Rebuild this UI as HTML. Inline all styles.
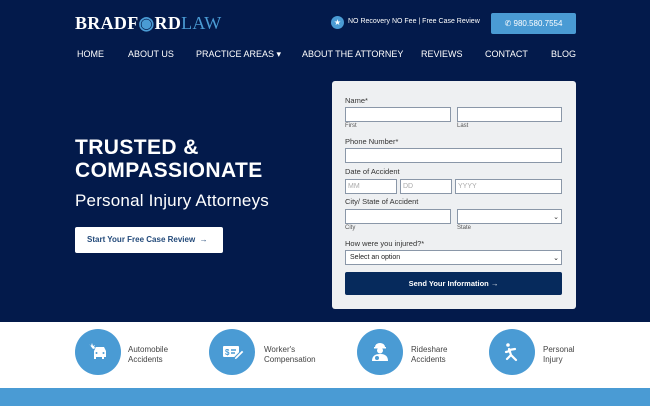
<!DOCTYPE html>
<html><head><style>
*{margin:0;padding:0;box-sizing:border-box}
body{width:650px;height:406px;overflow:hidden;background:#fff;font-family:"Liberation Sans",sans-serif;position:relative}
.hero{position:absolute;left:0;top:0;width:650px;height:322px;background:#031a4b}
.abs{position:absolute}
.logo{left:75px;top:13px;font-family:"Liberation Serif",serif;font-weight:bold;font-size:18px;color:#fff;letter-spacing:0.3px}
.logo span{color:#4a9bd4;font-weight:normal}
.nav{top:49px;font-size:9px;color:#fff}
.lbl{font-size:7.5px;color:#333}
.sub{font-size:6px;color:#555}
.in{position:absolute;height:15px;background:#fff;border:1px solid #8a97a8;font-size:7px;color:#aaa;padding:3px 2px}
.circ{position:absolute;top:329px;width:46px;height:46px;border-radius:50%;background:#4a9bd4}
.circ svg{position:absolute;left:13px;top:13px}
.ct{position:absolute;top:345px;font-size:8px;color:#444;line-height:10px}
</style></head><body>
<div class="hero"></div>
<div class="abs logo">BRADF<b style="color:#4a9bd4">◉</b>RD<span>LAW</span></div>
<div class="abs" style="left:331px;top:16px;width:13px;height:13px;border-radius:50%;background:#4a9bd4;color:#fff;font-size:8px;text-align:center;line-height:13px">★</div>
<div class="abs" style="left:348px;top:18px;font-size:7px;color:#fff">NO Recovery NO Fee | Free Case Review</div>
<div class="abs" style="left:491px;top:13px;width:85px;height:21px;background:#4a9bd4;border-radius:2px;color:#fff;font-size:8px;line-height:21px;text-align:center">✆ 980.580.7554</div>
<div class="abs nav" style="left:77px">HOME</div>
<div class="abs nav" style="left:128px">ABOUT US</div>
<div class="abs nav" style="left:196px">PRACTICE AREAS ▾</div>
<div class="abs nav" style="left:302px">ABOUT THE ATTORNEY</div>
<div class="abs nav" style="left:421px">REVIEWS</div>
<div class="abs nav" style="left:485px">CONTACT</div>
<div class="abs nav" style="left:551px">BLOG</div>
<div class="abs" style="left:75px;top:136px;color:#fff;font-size:21px;line-height:23px;font-weight:bold;letter-spacing:0.4px">TRUSTED &amp;<br>COMPASSIONATE</div>
<div class="abs" style="left:75px;top:191px;color:#fff;font-size:17px;font-weight:300;letter-spacing:0.2px">Personal Injury Attorneys</div>
<div class="abs" style="left:75px;top:227px;width:148px;height:26px;background:#fff;border-radius:2px;color:#234a7a;font-size:8px;font-weight:bold;line-height:26px;padding-left:12px">Start Your Free Case Review &nbsp;→</div>
<div class="abs" style="left:332px;top:81px;width:244px;height:228px;background:#eef0f2;border-radius:3px"></div>
<div class="abs lbl" style="left:345px;top:96px">Name*</div>
<div class="in" style="left:345px;top:107px;width:106px"></div>
<div class="in" style="left:457px;top:107px;width:105px"></div>
<div class="abs sub" style="left:345px;top:123px">First</div>
<div class="abs sub" style="left:457px;top:123px">Last</div>
<div class="abs lbl" style="left:345px;top:137px">Phone Number*</div>
<div class="in" style="left:345px;top:148px;width:217px"></div>
<div class="abs lbl" style="left:345px;top:167px">Date of Accident</div>
<div class="in" style="left:345px;top:179px;width:52px">MM</div>
<div class="in" style="left:400px;top:179px;width:52px">DD</div>
<div class="in" style="left:455px;top:179px;width:107px">YYYY</div>
<div class="abs lbl" style="left:345px;top:197px">City/ State of Accident</div>
<div class="in" style="left:345px;top:209px;width:106px"></div>
<div class="in" style="left:457px;top:209px;width:105px;color:#333;text-align:right">⌄</div>
<div class="abs sub" style="left:345px;top:225px">City</div>
<div class="abs sub" style="left:457px;top:225px">State</div>
<div class="abs lbl" style="left:345px;top:239px">How were you injured?*</div>
<div class="in" style="left:345px;top:250px;width:217px;color:#222;padding-left:4px">Select an option<span style="float:right">⌄</span></div>
<div class="abs" style="left:345px;top:272px;width:217px;height:23px;background:#062a5c;border-radius:2px;color:#fff;font-size:7.5px;font-weight:bold;text-align:center;line-height:23px">Send Your Information →</div>
<div class="circ" style="left:75px"><svg width="20" height="20" viewBox="0 0 20 20" fill="#fff"><path d="M1 2l2 2 1-3 1 3 2-1-1 2 2 1-3 1z"/><path d="M6 9l2-4h8l2 4v6h-2v2h-2v-2H8v2H6z"/><circle cx="8.5" cy="11" r="1" fill="#4a9bd4"/><circle cx="15.5" cy="11" r="1" fill="#4a9bd4"/></svg></div>
<div class="ct" style="left:128px">Automobile<br>Accidents</div>
<div class="circ" style="left:209px"><svg width="22" height="20" viewBox="0 0 22 20"><rect x="1" y="4" width="16" height="11" rx="1" fill="#fff"/><text x="3" y="13" font-size="8" font-weight="bold" fill="#4a9bd4" font-family="Liberation Sans">$</text><path d="M9 8h5M9 11h4" stroke="#4a9bd4" stroke-width="1.5"/><path d="M13 15l7-7 2 2-7 7-3 1z" fill="#fff" stroke="#4a9bd4"/></svg></div>
<div class="ct" style="left:264px">Worker's<br>Compensation</div>
<div class="circ" style="left:357px"><svg width="20" height="20" viewBox="0 0 20 20" fill="#fff"><path d="M5 5a5 4 0 0 1 10 0z"/><rect x="4" y="5" width="12" height="1.5"/><circle cx="10" cy="8.5" r="3"/><path d="M2 19c0-5 3-7 8-7s8 2 8 7z"/><circle cx="7" cy="16" r="2" fill="#4a9bd4"/></svg></div>
<div class="ct" style="left:411px">Rideshare<br>Accidents</div>
<div class="circ" style="left:489px"><svg width="20" height="20" viewBox="0 0 20 20" fill="none" stroke="#fff" stroke-width="2.2" stroke-linecap="round"><circle cx="6" cy="3" r="1.8" fill="#fff" stroke="none"/><path d="M7 7l2 6 5 5M9 13l-4 4M7 8l6-1M8 9l-4 1"/></svg></div>
<div class="ct" style="left:543px">Personal<br>Injury</div>
<div class="abs" style="left:0;top:388px;width:650px;height:18px;background:#4a9bd4"></div>
</body></html>
